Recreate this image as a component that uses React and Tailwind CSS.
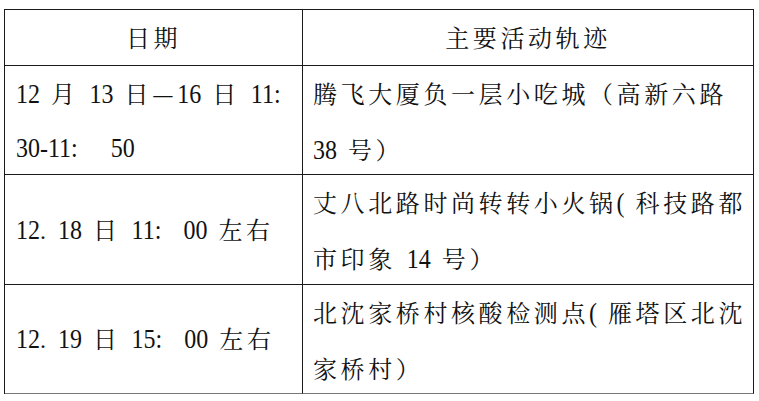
import React from "react";

const CJK = /[\u2014\u3000-\u9fff\uff00-\uffef]/;

function T({ s }) {
  const parts = s.split(/([\u2014\u3000-\u9fff\uff00-\uffef]+)/).filter((p) => p !== "");
  return (
    <>
      {parts.map((p, i) =>
        CJK.test(p) ? (
          <span key={i} className="tracking-[3.6px] font-['Noto_Serif_CJK_SC',serif]">{p}</span>
        ) : (
          <span key={i} className="inline-block scale-y-[1.15] origin-[50%_60%]">{p}</span>
        )
      )}
    </>
  );
}

export default function App() {
  const cell = "border-r border-b border-[#1a1a1a]";
  return (
    <div className="w-[759px] h-[401px] bg-white pt-[9px] pl-[4px] text-[#111] font-['Liberation_Serif','Noto_Serif_CJK_SC',serif] text-[24px] leading-[54px] whitespace-pre [word-spacing:5px]">
      <div className="w-[750px] grid grid-cols-[298px_451px] border-l border-t border-[#1a1a1a]">
        <div className={`${cell} h-[56px] flex items-center justify-center`}>
          <div><T s="日期" /></div>
        </div>
        <div className={`${cell} h-[56px] flex items-center justify-center`}>
          <div><T s="主要活动轨迹" /></div>
        </div>

        <div className={`${cell} h-[109px] pl-[11px]`}>
          <T s="12 月 13 日—16 日 11:" />
          <br />
          <T s="30-11:   50" />
        </div>
        <div className={`${cell} h-[109px] pl-[10px]`}>
          <T s="腾飞大厦负一层小吃城（高新六路" />
          <br />
          <T s="38 号）" />
        </div>

        <div className={`${cell} h-[110px] pl-[11px] flex items-center`}>
          <div>
            <T s="12" />
            <span className="inline-block tracking-[12px]">.</span>
            <T s="18 日 11:  00 左右" />
          </div>
        </div>
        <div className={`${cell} h-[110px] pl-[10px] flex items-center`}>
          <div className="leading-[53px] pt-[3px]">
            <T s="丈八北路时尚转转小火锅( 科技路都" />
            <br />
            <T s="市印象 14 号）" />
          </div>
        </div>

        <div className="border-r border-b border-r-[#1a1a1a] border-b-[#777] h-[109px] pl-[11px] flex items-center">
          <div>
            <T s="12" />
            <span className="inline-block tracking-[12px]">.</span>
            <T s="19 日 15:  00 左右" />
          </div>
        </div>
        <div className="border-r border-b border-r-[#1a1a1a] border-b-[#777] h-[109px] pl-[10px] flex items-center">
          <div className="leading-[53px] pt-[3px]">
            <T s="北沈家桥村核酸检测点( 雁塔区北沈" />
            <br />
            <T s="家桥村）" />
          </div>
        </div>
      </div>
    </div>
  );
}
